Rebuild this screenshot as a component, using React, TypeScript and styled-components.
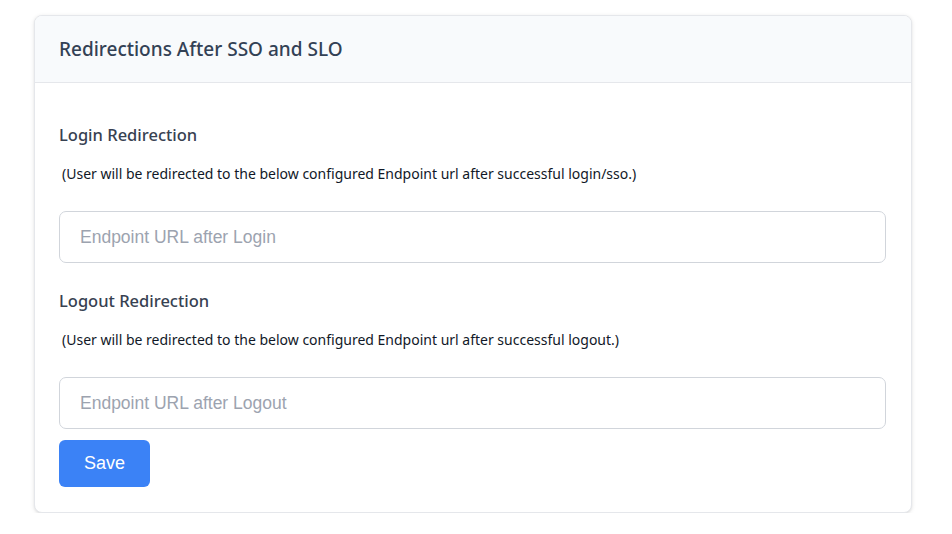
import React from "react";
import styled, { createGlobalStyle } from "styled-components";

const Global = createGlobalStyle`
  html, body { margin: 0; padding: 0; background: #ffffff; }
  body { padding: 15px 40px 0 34px; font-family: "Noto Sans", "Open Sans", sans-serif; }
  * { box-sizing: border-box; }
`;

const Card = styled.div`
  width: 878px;
  border: 1px solid #e5e7eb;
  border-radius: 8px;
  background: #ffffff;
  box-shadow: 0 1px 4px rgba(0, 0, 0, 0.1), 0 1px 2px rgba(0, 0, 0, 0.05);
  overflow: hidden;
`;

const Header = styled.div`
  height: 67px;
  display: flex;
  align-items: center;
  padding: 0 24px;
  background: #f8fafc;
  border-bottom: 1px solid #e5e7eb;
`;

const Title = styled.h2`
  margin: 0;
  font-family: "Noto Sans", sans-serif;
  font-size: 19px;
  font-weight: 500;
  color: #334155;
`;

const Body = styled.div`
  display: flex;
  flex-direction: column;
  padding: 40px 25px 25px 24px;
`;

const Section = styled.div<{ $first?: boolean }>`
  display: flex;
  flex-direction: column;
  margin-top: ${(p) => (p.$first ? "0" : "26px")};
`;

const Label = styled.h3`
  margin: 0;
  font-family: "Noto Sans", sans-serif;
  font-size: 16.5px;
  line-height: 24px;
  font-weight: 500;
  color: #374151;
`;

const Hint = styled.p`
  margin: 17px 0 0 3px;
  font-family: "Noto Sans", sans-serif;
  font-size: 14px;
  line-height: 20px;
  color: #111827;
`;

const Input = styled.input`
  margin-top: 27px;
  height: 52px;
  width: 100%;
  padding: 0 20px;
  border: 1px solid #d1d5db;
  border-radius: 7px;
  font-family: "Liberation Sans", Arial, sans-serif;
  font-size: 17.5px;
  color: #111827;
  outline: none;
  background: #ffffff;
  &::placeholder { color: #9ca3af; }
`;

const SaveButton = styled.button`
  margin-top: 11px;
  align-self: flex-start;
  width: 91px;
  height: 47px;
  border: none;
  border-radius: 6px;
  background: #3b82f6;
  color: #ffffff;
  font-family: "Liberation Sans", Arial, sans-serif;
  font-size: 18px;
  cursor: pointer;
`;

export default function App() {
  return (
    <>
      <Global />
      <Card>
        <Header>
          <Title>Redirections After SSO and SLO</Title>
        </Header>
        <Body>
          <Section $first>
            <Label>Login Redirection</Label>
            <Hint>(User will be redirected to the below configured Endpoint url after successful login/sso.)</Hint>
            <Input placeholder="Endpoint URL after Login" />
          </Section>
          <Section>
            <Label>Logout Redirection</Label>
            <Hint>(User will be redirected to the below configured Endpoint url after successful logout.)</Hint>
            <Input placeholder="Endpoint URL after Logout" />
          </Section>
          <SaveButton>Save</SaveButton>
        </Body>
      </Card>
    </>
  );
}
